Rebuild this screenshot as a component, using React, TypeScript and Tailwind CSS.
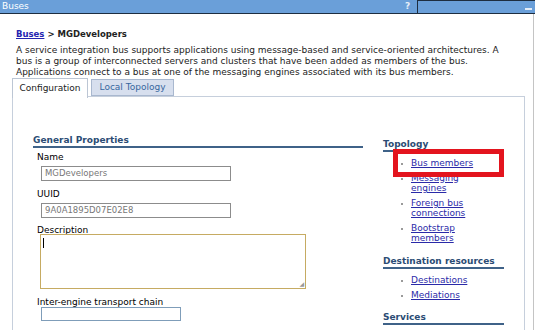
import React from 'react';

const font = { fontFamily: '"DejaVu Sans", Verdana, sans-serif' };

function Field({ label, value, labelTop, width }: { label: string; value: string; labelTop: string; width: string }) {
  return (
    <div className={labelTop}>
      <div className="pl-[4px] text-[9px] leading-[11px] text-black">{label}</div>
      <div className={`ml-[8px] mt-[3px] h-[15px] ${width} border border-[#8c8c8c] bg-white px-[3px] text-[8.5px] leading-[13px] text-[#777]`}>
        {value}
      </div>
    </div>
  );
}

function NavLink({ children }: { children: React.ReactNode }) {
  return (
    <li className="flex items-start gap-[8px] pl-[18px]">
      <span className="mt-[5px] h-[2px] w-[2px] shrink-0 bg-[#9a9a9a]" />
      <a className="text-[9px] leading-[10.5px] text-[#2a2aa8] underline">{children}</a>
    </li>
  );
}

function SideHeading({ children, full }: { children: React.ReactNode; full?: boolean }) {
  return (
    <div className={`text-[9px] leading-[11px] font-bold text-[#2b4c74] ${full ? 'border-b-2 border-[#3f6288]' : ''}`}>
      <span className={full ? '' : 'inline-block border-b-2 border-[#3f6288]'}>{children}</span>
    </div>
  );
}

export default function App() {
  return (
    <div className="h-[330px] w-[535px] overflow-hidden bg-white" style={font}>
      {/* portlet title bar */}
      <div className="flex h-[14px] border-b border-[#1d2d40] bg-[#6a9fd9]">
        <div className="flex flex-1 items-center pl-[2px] text-[9px] text-white">Buses</div>
        <div className="flex w-[12px] items-center text-[9px] font-bold text-[#e6eef8]">?</div>
        <div className="flex w-[118px] items-end justify-end border-l border-t border-[#1d2d40] pb-[2px] pr-[3px]">
          <span className="mb-[1px] h-[2px] w-[7px] bg-[#e3ecf7]" />
        </div>
      </div>

      <div className="flex h-[316px]">
        <div className="flex-1 pl-[16px] pt-[14px]">
          <div className="text-[8.5px] font-bold leading-[12px] text-[#222]">
            <a className="text-[#2424b0] underline">Buses</a> &gt; MGDevelopers
          </div>
          <p className="mt-[5px] pr-[22px] text-[9px] leading-[11px] text-[#222]">
            A service integration bus supports applications using message-based and service-oriented architectures. A bus is a group of interconnected servers and clusters that have been added as members of the bus. Applications connect to a bus at one of the messaging engines associated with its bus members.
          </p>

          {/* tabs */}
          <div className="ml-[-4px] mt-0 flex items-start gap-[3px]">
            <div className="relative z-10 flex h-[20px] w-[76px] items-center justify-center border border-b-0 border-[#bcc6d4] bg-white text-[9px] text-[#222]">
              Configuration
            </div>
            <div className="mt-[1px] flex h-[17px] w-[83px] items-center justify-center border border-[#a9b8cf] bg-[#d7dfee] text-[9px] text-[#36669e]">
              Local Topology
            </div>
          </div>

          <div className="ml-[-4px] mt-[-2px] flex h-[240px] w-[513px] border border-b-0 border-[#c6cfdc] pl-[20px] pt-[38px]">
            {/* general properties */}
            <div className="w-[330px]">
              <div className="border-b-2 border-[#3f6288] text-[9px] font-bold leading-[11px] text-[#2b4c74]">
                General Properties
              </div>
              <Field label="Name" value="MGDevelopers" labelTop="mt-[4px]" width="w-[190px]" />
              <Field label="UUID" value="9A0A1895D07E02E8" labelTop="mt-[8px]" width="w-[190px]" />
              <div className="mt-[7px]">
                <div className="pl-[4px] text-[9px] leading-[11px] text-black">Description</div>
                <div className="relative ml-[7px] mt-[-2px] h-[55px] w-[266px] border border-[#c6ab62] bg-white">
                  <span className="absolute left-[2px] top-[3px] h-[10px] w-[1px] bg-black" />
                  <span className="absolute bottom-[1px] right-[1px] text-[6px] leading-[6px] text-[#999]">◢</span>
                </div>
              </div>
              <div className="mt-[8px]">
                <div className="pl-[4px] text-[9px] leading-[11px] text-black">Inter-engine transport chain</div>
                <div className="ml-[8px] mt-[-1px] h-[14px] w-[140px] border border-[#7f9db9] bg-white" />
              </div>
            </div>

            {/* related items */}
            <div className="relative ml-[20px] w-[121px]">
              <div className="mt-[4px]">
                <SideHeading>Topology</SideHeading>
              </div>
              <ul className="mt-[6px] flex flex-col gap-[4px]">
                <NavLink>Bus members</NavLink>
                <NavLink>Messaging<br />engines</NavLink>
                <NavLink>Foreign bus<br />connections</NavLink>
                <NavLink>Bootstrap<br />members</NavLink>
              </ul>
              <div className="mt-[12px]">
                <SideHeading full>Destination resources</SideHeading>
              </div>
              <ul className="mt-[6px] flex flex-col gap-[4.5px]">
                <NavLink>Destinations</NavLink>
                <NavLink>Mediations</NavLink>
              </ul>
              <div className="mt-[12px]">
                <SideHeading full>Services</SideHeading>
              </div>

              {/* highlight annotation */}
              <div className="absolute left-[10px] top-[14px] h-[28px] w-[111px] border-[5px] border-[#e3141e]" />
            </div>
          </div>
        </div>
        <div className="mr-[1px] w-[1px] bg-[#c4c4c4]" />
      </div>
    </div>
  );
}
